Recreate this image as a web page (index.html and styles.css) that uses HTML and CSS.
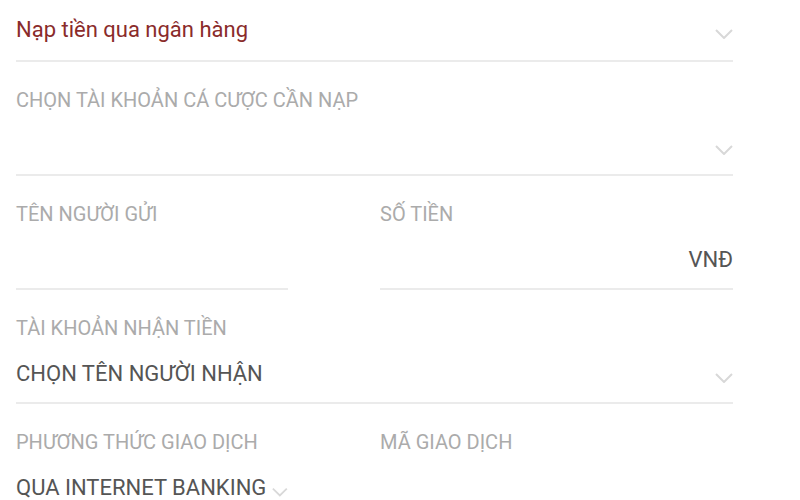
FILE: index.html
```html
<!DOCTYPE html>
<html lang="vi">
<head>
<meta charset="utf-8">
<link rel="stylesheet" href="styles.css">
</head>
<body>
<form class="form">
  <div class="field field-title">
    <div class="value-row">
      <span class="title">Nạp tiền qua ngân hàng</span>
      <svg class="chev" viewBox="0 0 18 10"><path d="M1 1 L9 9 L17 1"/></svg>
    </div>
  </div>

  <div class="field">
    <div class="label">CHỌN TÀI KHOẢN CÁ CƯỢC CẦN NẠP</div>
    <div class="value-row">
      <span class="value"></span>
      <svg class="chev" viewBox="0 0 18 10"><path d="M1 1 L9 9 L17 1"/></svg>
    </div>
  </div>

  <div class="row">
    <div class="field">
      <div class="label">TÊN NGƯỜI GỬI</div>
      <div class="value-row"><span class="value"></span></div>
    </div>
    <div class="field">
      <div class="label">SỐ TIỀN</div>
      <div class="value-row end"><span class="value">VNĐ</span></div>
    </div>
  </div>

  <div class="field">
    <div class="label">TÀI KHOẢN NHẬN TIỀN</div>
    <div class="value-row">
      <span class="value">CHỌN TÊN NGƯỜI NHẬN</span>
      <svg class="chev" viewBox="0 0 18 10"><path d="M1 1 L9 9 L17 1"/></svg>
    </div>
  </div>

  <div class="row">
    <div class="field open">
      <div class="label">PHƯƠNG THỨC GIAO DỊCH</div>
      <div class="value-row start">
        <span class="value">QUA INTERNET BANKING</span>
        <svg class="chev" viewBox="0 0 18 10"><path d="M1 1 L9 9 L17 1"/></svg>
      </div>
    </div>
    <div class="field open">
      <div class="label">MÃ GIAO DỊCH</div>
      <div class="value-row"><span class="value"></span></div>
    </div>
  </div>
</form>
</body>
</html>
```

FILE: styles.css
```css
html, body {
  margin: 0;
  padding: 0;
  background: #ffffff;
}
body {
  font-family: Roboto, "Liberation Sans", sans-serif;
  overflow: hidden;
}
.form {
  width: 717px;
  margin-left: 16px;
  display: flex;
  flex-direction: column;
}
.field {
  padding: 26px 0 15px;
  border-bottom: 2px solid #ebebeb;
}
.field-title {
  padding: 17px 0 17px;
}
.row {
  display: grid;
  grid-template-columns: 272px 353px;
  column-gap: 92px;
}
.field.open {
  border-bottom: none;
}
.label {
  font-size: 20px;
  line-height: 24px;
  color: #ababab;
  margin-bottom: 21px;
  white-space: nowrap;
}
.value-row {
  display: flex;
  align-items: center;
  justify-content: space-between;
  height: 26px;
}
.value-row.end {
  justify-content: flex-end;
}
.value-row.start {
  justify-content: flex-start;
  gap: 6px;
}
.title {
  font-size: 22px;
  line-height: 26px;
  color: #8a2b2b;
}
.value {
  font-size: 22px;
  line-height: 26px;
  color: #555555;
  white-space: nowrap;
}
.chev {
  width: 18px;
  height: 10px;
  fill: none;
  stroke: #d8d8d8;
  stroke-width: 2;
  margin-top: 8px;
}
.value-row.start .chev {
  margin-top: 7px;
}
```
